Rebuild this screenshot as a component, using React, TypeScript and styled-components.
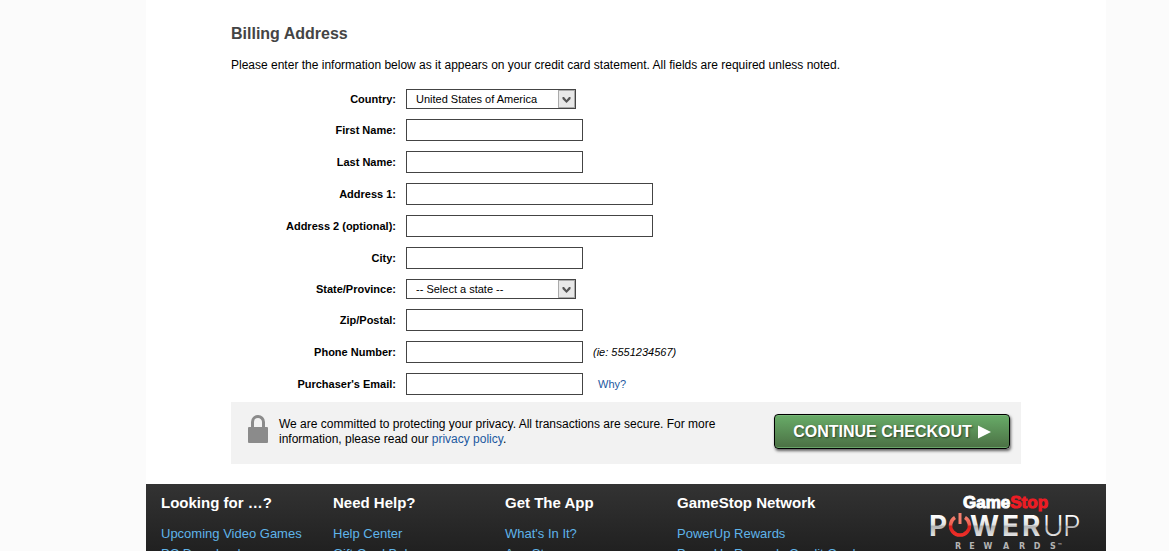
import React from "react";
import styled, { createGlobalStyle } from "styled-components";

const GlobalStyle = createGlobalStyle`
  * { box-sizing: border-box; }
  body {
    margin: 0;
    background: #fbfbfb;
    color: #000;
    font-family: "Liberation Sans", Arial, Helvetica, sans-serif;
    font-size: 12px;
  }
`;

const Viewport = styled.div`
  height: 100vh;
  overflow: hidden;
  padding: 0 63px 0 146px;
`;

const Page = styled.div`
  background: #fff;
`;

const Content = styled.main`
  padding: 24px 85px 20px;
`;

const Title = styled.h1`
  margin: 0;
  color: #444;
  font-size: 16px;
  line-height: 20px;
`;

const Intro = styled.p`
  margin: 13px 0 16px;
  line-height: 16px;
`;

const Form = styled.form`
  margin: 0;
`;

const Fields = styled.div`
  display: flex;
  flex-direction: column;
  gap: 10px;
`;

const Row = styled.div`
  display: grid;
  grid-template-columns: 165px auto 1fr;
  column-gap: 10px;
  align-items: center;
  font-size: 11px;
`;

const Label = styled.label`
  text-align: right;
  font-weight: bold;
`;

const TextInput = styled.input<{ $wide?: boolean }>`
  width: ${(p) => (p.$wide ? 247 : 177)}px;
  height: 22px;
  padding: 2px 8px;
  border: 1px solid #444;
  border-radius: 0;
  background: #fff;
  font: inherit;
`;

const SelectBox = styled.span`
  position: relative;
  display: block;
  width: 170px;
  height: 20px;
`;

const Select = styled.select`
  appearance: none;
  display: block;
  width: 100%;
  height: 100%;
  padding: 0 20px 0 9px;
  border: 1px solid #444;
  border-radius: 0;
  background: #fff;
  color: #000;
  font: inherit;
`;

const SelectArrow = styled.svg`
  position: absolute;
  top: 1px;
  right: 1px;
  width: 17px;
  height: 18px;
  pointer-events: none;
`;

const Example = styled.em`
  font-style: italic;
`;

const Link = styled.a`
  color: #1c58a0;
  text-decoration: none;
`;

const Why = styled(Link)`
  justify-self: start;
  padding-left: 5px;
`;

const Submit = styled.div`
  display: flex;
  align-items: flex-start;
  margin-top: 7px;
  padding: 12px 11px 15px 17px;
  background: #f2f2f2;
`;

const Privacy = styled.p`
  flex: 1;
  max-width: 460px;
  margin: 3px auto 0 11px;
  line-height: 15px;
`;

const Checkout = styled.button`
  display: flex;
  align-items: center;
  justify-content: center;
  gap: 6px;
  width: 236px;
  height: 35px;
  padding: 0;
  border: 1px solid #000;
  border-radius: 4px;
  background: linear-gradient(#68ac68, #4b7044);
  box-shadow: 1px 2px 3px rgba(0, 0, 0, 0.6), inset 0 -1px 0 #69a569, inset 0 1px 0 #78b678;
  color: #fff;
  font: bold 16px "Liberation Sans", Arial, sans-serif;
  text-shadow: 1px 1px 2px rgba(0, 0, 0, 0.5);
`;

const Footer = styled.footer`
  display: grid;
  grid-template-columns: repeat(4, 172px) 1fr;
  padding: 9px 25px 20px 15px;
  background: linear-gradient(#333, #1d1d1d 80px);
`;

const FooterTitle = styled.h2`
  margin: 0 0 11px;
  color: #fff;
  font-size: 15px;
  line-height: 20px;
`;

const FooterList = styled.ul`
  margin: 0;
  padding: 0;
  list-style: none;
  font-size: 13px;
  line-height: 20px;
  white-space: nowrap;
`;

const FooterLink = styled(Link)`
  color: #5fb4ea;
`;

const Logo = styled.svg`
  display: block;
  justify-self: end;
  width: 160px;
  height: 60px;
`;

type FieldSpec = {
  id: string;
  label: string;
  wide?: boolean;
  option?: string;
  type?: string;
  after?: React.ReactNode;
};

const fields: FieldSpec[] = [
  { id: "country", label: "Country:", option: "United States of America" },
  { id: "first", label: "First Name:" },
  { id: "last", label: "Last Name:" },
  { id: "address1", label: "Address 1:", wide: true },
  { id: "address2", label: "Address 2 (optional):", wide: true },
  { id: "city", label: "City:" },
  { id: "state", label: "State/Province:", option: "-- Select a state --" },
  { id: "zip", label: "Zip/Postal:" },
  { id: "phone", label: "Phone Number:", type: "tel", after: <Example>(ie: 5551234567)</Example> },
  { id: "email", label: "Purchaser's Email:", type: "email", after: <Why href="#why">Why?</Why> },
];

const columns = [
  { title: "Looking for \u2026?", links: ["Upcoming Video Games", "PC Downloads"] },
  { title: "Need Help?", links: ["Help Center", "Gift Card Balance"] },
  { title: "Get The App", links: ["What's In It?", "App Store"] },
  { title: "GameStop Network", links: ["PowerUp Rewards", "PowerUp Rewards Credit Card"] },
];

function Field({ id, label, wide, option, type = "text", after }: FieldSpec) {
  return (
    <Row>
      <Label htmlFor={id}>{label}</Label>
      {option ? (
        <SelectBox>
          <Select id={id}>
            <option>{option}</option>
          </Select>
          <SelectArrow viewBox="0 0 17 18" aria-hidden="true">
            <rect x="0.5" y="0.5" width="16" height="17" fill="#e8e8e8" stroke="#aaa" />
            <path d="M4.500 7v2l4 4 4-4V7h-1.500l-2.500 3L6 7z" fill="#555" />
          </SelectArrow>
        </SelectBox>
      ) : (
        <TextInput id={id} type={type} $wide={wide} />
      )}
      {after}
    </Row>
  );
}

function Lock() {
  return (
    <svg width="20" height="30" viewBox="0 0 20 30" aria-hidden="true">
      <path d="M4.500 14V8a5.500 5.500 0 0 1 11 0v6" fill="none" stroke="#8b8b8b" strokeWidth="3" />
      <rect y="13" width="20" height="16" rx="1" fill="#8b8b8b" />
    </svg>
  );
}

const rewards: [string, number][] = [
  ["R", 37],
  ["E", 51],
  ["W", 67],
  ["A", 85],
  ["R", 101],
  ["D", 116],
  ["S", 132],
];

function PowerUpLogo() {
  return (
    <Logo viewBox="0 0 160 60" role="img" aria-label="GameStop PowerUp Rewards">
      <defs>
        <linearGradient id="silver" gradientUnits="userSpaceOnUse" x1="0" y1="22" x2="0" y2="43">
          <stop offset="0" stopColor="#fff" />
          <stop offset="0.45" stopColor="#e4e4e4" />
          <stop offset="0.55" stopColor="#b4b4b4" />
          <stop offset="1" stopColor="#e4e4e4" />
        </linearGradient>
        <linearGradient id="ember" gradientUnits="userSpaceOnUse" x1="0" y1="22" x2="0" y2="43">
          <stop offset="0" stopColor="#f58a78" />
          <stop offset="0.48" stopColor="#ee5a4a" />
          <stop offset="0.52" stopColor="#d81f1c" />
          <stop offset="1" stopColor="#f0302a" />
        </linearGradient>
      </defs>
      <text
        x="42"
        y="15"
        fontFamily="Liberation Sans, sans-serif"
        fontSize="17"
        fontWeight="700"
        fill="#fff"
        stroke="#fff"
        strokeWidth="1"
      >
        Game<tspan fill="#ed1c24" stroke="#ed1c24">Stop</tspan>
      </text>
      <g fontFamily="Inter, sans-serif" fontSize="28" fill="url(#silver)">
        <text x="8" y="43" fontWeight="700">P</text>
        <text x="49" y="43" fontWeight="700">W</text>
        <text x="81" y="43" fontWeight="700">E</text>
        <text x="101" y="43" fontWeight="700">R</text>
        <text x="122" y="43" fontWeight="300">U</text>
        <text x="142" y="43" fontWeight="300">P</text>
      </g>
      <path d="M34 24.500a9.500 9.500 0 1 0 10 0" fill="none" stroke="url(#ember)" strokeWidth="3.500" />
      <rect x="37.500" y="20" width="3" height="11" fill="#f4806e" />
      <g fontFamily="DejaVu Sans, sans-serif" fontSize="8" fontWeight="700" fill="#b4b4b4" textAnchor="middle">
        {rewards.map(([letter, x]) => (
          <text key={x} x={x} y="56">
            {letter}
          </text>
        ))}
        <text x="139" y="54" fontSize="5">{"\u2122"}</text>
      </g>
    </Logo>
  );
}

export default function App() {
  return (
    <Viewport>
      <GlobalStyle />
      <Page>
        <Content>
          <Title>Billing Address</Title>
          <Intro>
            Please enter the information below as it appears on your credit card statement. All fields are required
            unless noted.
          </Intro>
          <Form>
            <Fields>
              {fields.map((f) => (
                <Field key={f.id} {...f} />
              ))}
            </Fields>
            <Submit>
              <Lock />
              <Privacy>
                We are committed to protecting your privacy. All transactions are secure. For more information, please
                read our <Link href="#privacy">privacy policy</Link>.
              </Privacy>
              <Checkout type="button">
                CONTINUE CHECKOUT
                <svg width="13" height="14" viewBox="0 0 13 14" aria-hidden="true">
                  <path d="M0 0.500 13 7 0 13.500z" fill="#fff" />
                </svg>
              </Checkout>
            </Submit>
          </Form>
        </Content>
        <Footer>
          {columns.map((c) => (
            <div key={c.title}>
              <FooterTitle>{c.title}</FooterTitle>
              <FooterList>
                {c.links.map((l) => (
                  <li key={l}>
                    <FooterLink href="#footer">{l}</FooterLink>
                  </li>
                ))}
              </FooterList>
            </div>
          ))}
          <PowerUpLogo />
        </Footer>
      </Page>
    </Viewport>
  );
}
